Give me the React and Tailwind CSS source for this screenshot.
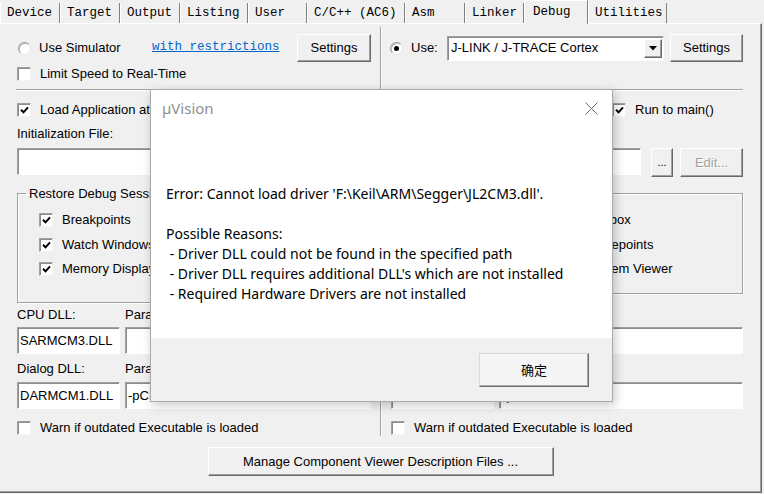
import React from 'react'

const tabs = [
  { label: 'Device', w: 'w-[60px]' },
  { label: 'Target', w: 'w-[60px]' },
  { label: 'Output', w: 'w-[60px]' },
  { label: 'Listing', w: 'w-[68px]' },
  { label: 'User', w: 'w-[59px]' },
  { label: 'C/C++ (AC6)', w: 'w-[98px]' },
  { label: 'Asm', w: 'w-[60px]' },
  { label: 'Linker', w: 'w-[59px]' },
  { label: 'Debug', w: 'w-[64px]', active: true },
  { label: 'Utilities', w: 'w-[79px]' },
]

function CheckBox({ checked, children, className = '' }) {
  return (
    <div className={`flex items-center h-[16px] ${className}`}>
      <span className="flex items-center justify-center w-[14px] h-[14px] shrink-0 bg-white border border-t-[#a0a0a0] border-l-[#a0a0a0] border-r-[#f4f4f4] border-b-[#f4f4f4] shadow-[inset_1px_1px_0_#8c8c8c]">
        {checked && (
          <svg width="9" height="8" viewBox="0 0 9 8">
            <path d="M1 3.8 L3.5 6.3 L8 1.3" fill="none" stroke="#000" strokeWidth="2" />
          </svg>
        )}
      </span>
      {children && <span className="ml-[9px] leading-[16px] whitespace-nowrap">{children}</span>}
    </div>
  )
}

function Radio({ checked, children, className = '' }) {
  return (
    <div className={`flex items-center ${className}`}>
      <span className="flex items-center justify-center w-[13px] h-[13px] shrink-0 rounded-full bg-white border border-t-[#9a9a9a] border-l-[#9a9a9a] border-r-[#e6e6e6] border-b-[#e6e6e6] shadow-[inset_1px_1px_0_#c4c4c4]">
        {checked && <span className="w-[5px] h-[5px] rounded-full bg-black" />}
      </span>
      <span className="ml-[8px] whitespace-nowrap">{children}</span>
    </div>
  )
}

function Btn({ children, className = '', disabled }) {
  return (
    <div
      className={`flex items-center justify-center bg-[#f0f0f0] border border-t-white border-l-white border-r-[#696969] border-b-[#696969] shadow-[inset_-1px_-1px_0_#a0a0a0] whitespace-nowrap ${
        disabled ? 'text-[#a0a0a0] [text-shadow:1px_1px_0_#fff]' : 'text-black'
      } ${className}`}
    >
      {children}
    </div>
  )
}

function Field({ children, className = '' }) {
  return (
    <div className={`flex items-center pl-[2px] bg-white border border-t-[#a0a0a0] border-l-[#a0a0a0] border-r-white border-b-white shadow-[inset_1px_1px_0_#8c8c8c] whitespace-nowrap overflow-hidden ${className}`}>
      {children}
    </div>
  )
}

function Column({ className, head, second, groupBox, group, dllLabel, cpu, dlg }) {
  return (
    <div className={`flex flex-col pt-[10px] ${className}`}>
      <div className="flex items-center h-[28px]">{head}</div>
      <div className="mt-[4px] h-[16px]">{second}</div>
      <div className="mt-[7px] -ml-[1px] h-[2px] border-t border-t-[#a0a0a0] border-b border-b-white" />
      <div className="mt-[11px] flex h-[16px]">
        <CheckBox checked className="w-[221px]">Load Application at Startup</CheckBox>
        <CheckBox checked>Run to main()</CheckBox>
      </div>
      <div className="mt-[8px] h-[16px] leading-[16px]">Initialization File:</div>
      <div className="mt-[6px] flex items-start h-[29px]">
        <Field className="flex-1 h-[27px]" />
        <Btn className="ml-[10px] w-[22px] h-[29px] text-[11px]">...</Btn>
        <Btn disabled className="ml-[7px] w-[63px] h-[29px]">Edit...</Btn>
      </div>
      <div className="mt-[9px] h-[117px]">
        <fieldset className={`border border-[#a0a0a0] shadow-[1px_1px_0_#fff,inset_1px_1px_0_#fff] ${groupBox}`}>
          <legend className="ml-[8px] px-[3px] leading-[15px]">Restore Debug Session Settings</legend>
          <div className="pl-[21px] pt-[11px] flex flex-col">
            <div className="flex">
              <CheckBox checked className="w-[150px]">Breakpoints</CheckBox>
              <CheckBox checked>Toolbox</CheckBox>
            </div>
            <div className="flex mt-[9px]">
              <CheckBox checked className="w-[150px]">{group[0]}</CheckBox>
              {group[1] && <CheckBox checked>{group[1]}</CheckBox>}
            </div>
            <div className="flex mt-[8px]">
              <CheckBox checked className="w-[150px]">Memory Display</CheckBox>
              <CheckBox checked>System Viewer</CheckBox>
            </div>
          </div>
        </fieldset>
      </div>
      <div className="mt-[4px] flex h-[16px] leading-[16px]">
        <span className="w-[108px]">{dllLabel}</span>
        <span>Parameter:</span>
      </div>
      <div className="mt-[4px] flex h-[27px]">
        <Field className="w-[103px] h-[27px]">{cpu[0]}</Field>
        <Field className="ml-[5px] flex-1 h-[27px]">{cpu[1]}</Field>
      </div>
      <div className="mt-[7px] flex h-[16px] leading-[16px]">
        <span className="w-[108px]">Dialog DLL:</span>
        <span>Parameter:</span>
      </div>
      <div className="mt-[5px] flex h-[27px]">
        <Field className="w-[103px] h-[27px]">{dlg[0]}</Field>
        <Field className="ml-[5px] flex-1 h-[27px]">{dlg[1]}</Field>
      </div>
      <CheckBox className="mt-[11px]">Warn if outdated Executable is loaded</CheckBox>
    </div>
  )
}

function ErrorDialog() {
  return (
    <div className="absolute left-[150px] top-[89px] w-[463px] h-[313px] z-20 flex flex-col bg-white border border-[#aaaaaa] shadow-[2px_3px_10px_rgba(0,0,0,0.22)] font-['Noto_Sans','Noto_Sans_CJK_SC',sans-serif]">
      <div className="h-[36px] shrink-0 flex items-center justify-between pl-[11px] pr-[14px]">
        <span className="text-[15px] text-[#8f8f8f]">µVision</span>
        <svg width="13" height="13" viewBox="0 0 13 13">
          <path d="M0.5 0.5 L12.5 12.5 M12.5 0.5 L0.5 12.5" stroke="#6a6a6a" strokeWidth="1" />
        </svg>
      </div>
      <div className="flex-1 pl-[15px] pt-[58px] text-[14px] leading-[20px] text-black whitespace-pre">
        <div>{"Error: Cannot load driver 'F:\\Keil\\ARM\\Segger\\JL2CM3.dll'."}</div>
        <div>{' '}</div>
        <div>Possible Reasons:</div>
        <div>{' - Driver DLL could not be found in the specified path'}</div>
        <div>{" - Driver DLL requires additional DLL's which are not installed"}</div>
        <div>{' - Required Hardware Drivers are not installed'}</div>
      </div>
      <div className="h-[63px] shrink-0 bg-[#f0f0f0] flex justify-end items-start pt-[15px] pr-[23px]">
        <div className="w-[110px] h-[34px] flex items-center justify-center bg-[#f5f5f5] border border-t-[#d8d8d8] border-l-[#d8d8d8] border-r-[#6d6d6d] border-b-[#6d6d6d] shadow-[inset_-1px_-1px_0_#a8a8a8] text-[13px] font-['Noto_Sans_CJK_SC',sans-serif]">
          确定
        </div>
      </div>
    </div>
  )
}

export default function App() {
  return (
    <div className="relative w-[764px] h-[494px] overflow-hidden bg-[#f0f0f0] text-[13px] text-black font-['Liberation_Sans',Arial,sans-serif]">
      {/* tab strip */}
      <div className="flex items-start h-[23px] font-['Liberation_Mono',monospace] text-[12.5px]">
        {tabs.map((t) =>
          t.active ? (
            <div key={t.label} className={`${t.w} relative z-10 h-[24px] pl-[8px] leading-[22px] bg-[#f0f0f0] border-t border-t-white border-l border-l-white border-r border-r-[#808080]`}>
              {t.label}
            </div>
          ) : (
            <div key={t.label} className={`${t.w} mt-[3px] h-[20px] pl-[6px] leading-[20px] border-l border-l-white border-r border-r-[#808080] whitespace-pre`}>
              {t.label}
            </div>
          )
        )}
      </div>

      {/* panel */}
      <div className="w-[762px] h-[470px] flex flex-col border-t border-t-white border-r border-r-[#696969] border-b border-b-[#696969] shadow-[inset_-1px_-1px_0_#a0a0a0]">
        <div className="flex h-[416px]">
          <div className="w-[380px] pl-[17px]">
            <Column
              className="w-[354px]"
              head={
                <>
                  <Radio className="w-[134px] ml-[1px]">Use Simulator</Radio>
                  <span className="font-['Liberation_Mono',monospace] text-[12.5px] text-[#0066cc] underline -mt-[2px]">with restrictions</span>
                  <Btn className="ml-auto w-[74px] h-[28px]">Settings</Btn>
                </>
              }
              second={<CheckBox>Limit Speed to Real-Time</CheckBox>}
              groupBox="h-[117px]"
              group={['Watch Windows & Performance Analyzer']}
              dllLabel="CPU DLL:"
              cpu={['SARMCM3.DLL', '']}
              dlg={['DARMCM1.DLL', '-pCM3']}
            />
          </div>
          <div className="w-[2px] mt-[3px] mb-[4px] border-l border-l-[#a0a0a0] border-r border-r-white" />
          <div className="pl-[9px]">
            <Column
              className="w-[352px]"
              head={
                <>
                  <Radio checked className="w-[57px] -ml-[1px]">Use:</Radio>
                  <Field className="w-[217px] h-[25px] pr-[1px]">
                    <span className="flex-1 pl-[1px]">J-LINK / J-TRACE Cortex</span>
                    <Btn className="w-[18px] h-[19px]">
                      <svg width="8" height="5" viewBox="0 0 8 5">
                        <path d="M0 0 H8 L4 4.5 Z" fill="#000" />
                      </svg>
                    </Btn>
                  </Field>
                  <Btn className="ml-auto w-[73px] h-[28px]">Settings</Btn>
                </>
              }
              second={null}
              groupBox="h-[108px]"
              group={['Watch Windows', 'Tracepoints']}
              dllLabel="Driver DLL:"
              cpu={['SARMCM3.DLL', '']}
              dlg={['TARMCM1.DLL', '-pCM3']}
            />
          </div>
        </div>
        <div className="mt-[7px] flex justify-center">
          <Btn className="w-[346px] h-[29px]">Manage Component Viewer Description Files ...</Btn>
        </div>
      </div>

      <ErrorDialog />
    </div>
  )
}
